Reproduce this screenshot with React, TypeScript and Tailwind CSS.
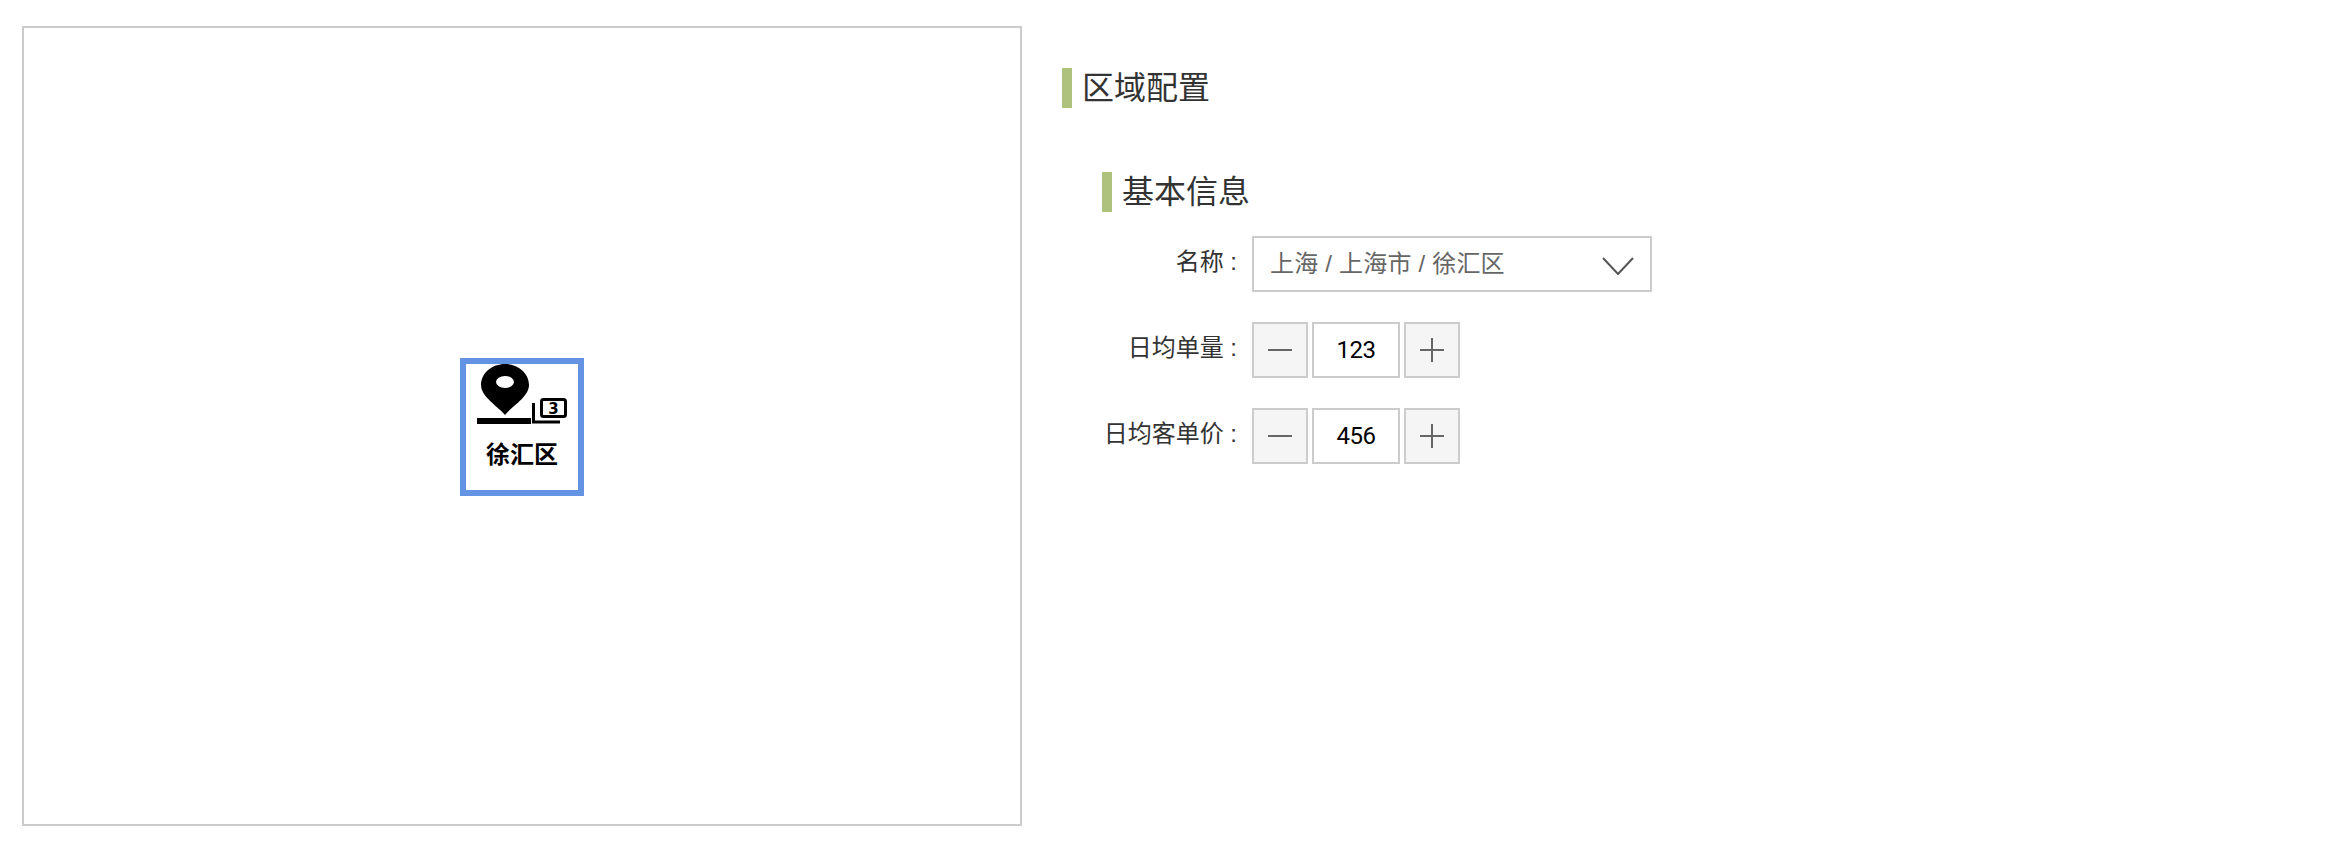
const fontStack = '"Liberation Sans", "Noto Sans CJK SC", sans-serif';

const rows = [
  { label: "日均单量", value: "123" },
  { label: "日均客单价", value: "456" },
];

function SectionTitle({ text }: { text: string }) {
  return (
    <div className="flex h-10 items-center">
      <span className="h-10 w-2.5 bg-[#aec17d]" />
      <h2 className="ml-2.5 text-[32px] leading-10 font-normal text-[#333]">{text}</h2>
    </div>
  );
}

function Label({ text }: { text: string }) {
  return (
    <label className="w-[150px] shrink-0 pr-[15px] pb-1 text-right text-2xl whitespace-pre text-[#333]">
      {text} :
    </label>
  );
}

function RegionMarker() {
  return (
    <div className="absolute top-[330px] left-[436px] flex h-[138px] w-[124px] flex-col border-[6px] border-[#6593e4] bg-white">
      <svg width="112" height="62" viewBox="0 0 112 62" className="block">
        <path
          d="M39 51C33 43 15 33 15 21C15 9 26 0 39 0C52 0 63 9 63 21C63 33 45 43 39 51Z"
          fill="#000"
        />
        <ellipse cx="39" cy="18" rx="9" ry="6" fill="#fff" />
        <rect x="11" y="54" width="54" height="6" fill="#000" />
        <path d="M67.5 39V58H94" fill="none" stroke="#000" strokeWidth="3" />
        <rect x="75.5" y="35.5" width="24" height="17" rx="2" fill="#fff" stroke="#000" strokeWidth="3" />
        <text x="87.5" y="50" textAnchor="middle" fontSize="15" fontWeight="700" fontFamily="DejaVu Sans, sans-serif">
          3
        </text>
      </svg>
      <span className="mt-[13px] text-center text-2xl leading-8 font-bold text-black">徐汇区</span>
    </div>
  );
}

function Stepper({ value }: { value: string }) {
  return (
    <div className="flex gap-1">
      <button className="flex h-14 w-14 items-center justify-center border-2 border-[#ccc] bg-[#f5f5f5]">
        <svg width="24" height="24" viewBox="0 0 24 24" fill="none" stroke="#666" strokeWidth="2">
          <path d="M0 12H24" />
        </svg>
      </button>
      <div className="flex h-14 w-[88px] items-center justify-center border-2 border-[#ccc] bg-white font-[Roboto] text-2xl tracking-[-0.5px] text-black">
        {value}
      </div>
      <button className="flex h-14 w-14 items-center justify-center border-2 border-[#ccc] bg-[#f5f5f5]">
        <svg width="24" height="24" viewBox="0 0 24 24" fill="none" stroke="#666" strokeWidth="2">
          <path d="M0 12H24M12 0V24" />
        </svg>
      </button>
    </div>
  );
}

export default function App() {
  return (
    <div className="flex h-[848px] w-[2330px] bg-white pt-[26px] pl-[22px]" style={{ fontFamily: fontStack }}>
      <div className="relative h-[800px] w-[1000px] shrink-0 border-2 border-[#ccc]">
        <RegionMarker />
      </div>
      <div className="mt-[42px] ml-10">
        <SectionTitle text="区域配置" />
        <div className="mt-16 ml-10">
          <SectionTitle text="基本信息" />
          <div className="mt-6 flex flex-col gap-[30px]">
            <div className="flex items-center">
              <Label text="名称" />
              <div className="flex h-14 w-[400px] items-center justify-between border-2 border-[#ccc] pr-4 pl-4 text-2xl tracking-[0.2px] text-[#666]">
                <span>上海 / 上海市 / 徐汇区</span>
                <svg width="32" height="18" viewBox="0 0 32 18" fill="none" stroke="#555" strokeWidth="2" className="mt-[3px]">
                  <path d="M1 1L16 17L31 1" />
                </svg>
              </div>
            </div>
            {rows.map((row) => (
              <div key={row.label} className="flex items-center">
                <Label text={row.label} />
                <Stepper value={row.value} />
              </div>
            ))}
          </div>
        </div>
      </div>
    </div>
  );
}
